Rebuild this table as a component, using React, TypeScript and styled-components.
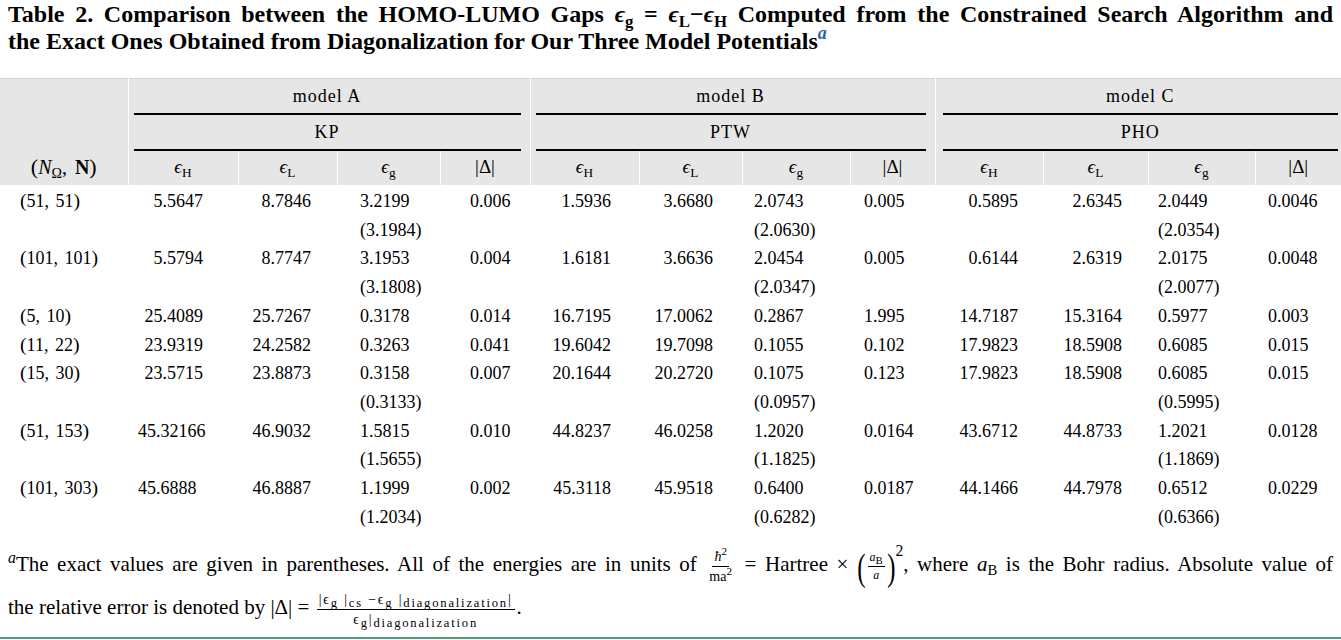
import React from "react";
import styled, { createGlobalStyle } from "styled-components";

const serif = `"Liberation Serif", "DejaVu Serif", serif`;

const Global = createGlobalStyle`
  html, body { margin: 0; padding: 0; background: #fff; }
  body { font-family: ${serif}; color: #000; }
`;

type Val = string | [string, string];
type Row = { n: string; m: string; cells: Val[]; leftFirst?: boolean };

const rows: Row[] = [
  { n: "51", m: "51", cells: ["5.5647", "8.7846", ["3.2199", "(3.1984)"], "0.006", "1.5936", "3.6680", ["2.0743", "(2.0630)"], "0.005", "0.5895", "2.6345", ["2.0449", "(2.0354)"], "0.0046"] },
  { n: "101", m: "101", cells: ["5.5794", "8.7747", ["3.1953", "(3.1808)"], "0.004", "1.6181", "3.6636", ["2.0454", "(2.0347)"], "0.005", "0.6144", "2.6319", ["2.0175", "(2.0077)"], "0.0048"] },
  { n: "5", m: "10", cells: ["25.4089", "25.7267", "0.3178", "0.014", "16.7195", "17.0062", "0.2867", "1.995", "14.7187", "15.3164", "0.5977", "0.003"] },
  { n: "11", m: "22", cells: ["23.9319", "24.2582", "0.3263", "0.041", "19.6042", "19.7098", "0.1055", "0.102", "17.9823", "18.5908", "0.6085", "0.015"] },
  { n: "15", m: "30", cells: ["23.5715", "23.8873", ["0.3158", "(0.3133)"], "0.007", "20.1644", "20.2720", ["0.1075", "(0.0957)"], "0.123", "17.9823", "18.5908", ["0.6085", "(0.5995)"], "0.015"] },
  { n: "51", m: "153", leftFirst: true, cells: ["45.32166", "46.9032", ["1.5815", "(1.5655)"], "0.010", "44.8237", "46.0258", ["1.2020", "(1.1825)"], "0.0164", "43.6712", "44.8733", ["1.2021", "(1.1869)"], "0.0128"] },
  { n: "101", m: "303", leftFirst: true, cells: ["45.6888", "46.8887", ["1.1999", "(1.2034)"], "0.002", "45.3118", "45.9518", ["0.6400", "(0.6282)"], "0.0187", "44.1466", "44.7978", ["0.6512", "(0.6366)"], "0.0229"] },
];

// per data column: width, alignment and inner padding
const cols: { w: number; align: "left" | "right"; pad: number }[] = [
  { w: 110, align: "right", pad: 35 }, { w: 99, align: "right", pad: 26 }, { w: 103, align: "left", pad: 23 }, { w: 90, align: "left", pad: 30 },
  { w: 109, align: "right", pad: 28 }, { w: 103, align: "right", pad: 29 }, { w: 108, align: "left", pad: 12 }, { w: 85, align: "left", pad: 14 },
  { w: 108, align: "right", pad: 25 }, { w: 105, align: "right", pad: 26 }, { w: 107, align: "left", pad: 10 }, { w: 86, align: "left", pad: 13 },
];

const groups = [
  { model: "model A", pot: "KP" },
  { model: "model B", pot: "PTW" },
  { model: "model C", pot: "PHO" },
];

const Eps = ({ s }: { s: string }) => (
  <>
    <Var>ϵ</Var>
    <Sub>{s}</Sub>
  </>
);

const App = () => {
  return (
    <Page>
      <Global />
      <Caption>
        <CaptionLine $justify>
          Table 2. Comparison between the HOMO-LUMO Gaps <Eps s="g" /> = <Eps s="L" />−<Eps s="H" /> Computed from the Constrained Search Algorithm and
        </CaptionLine>
        <CaptionLine>
          the Exact Ones Obtained from Diagonalization for Our Three Model Potentials<NoteMark>a</NoteMark>
        </CaptionLine>
      </Caption>

      <Table>
        <colgroup>
          <col style={{ width: 128 }} />
          {cols.map((c, i) => (
            <col key={i} style={{ width: c.w }} />
          ))}
        </colgroup>
        <thead>
          <tr>
            <StubHead rowSpan={2} />
            {groups.map((g, i) => (
              <HeadCell key={g.model} colSpan={4} $divider={i > 0}>
                <GroupLabel $last={i === 2}>{g.model}</GroupLabel>
              </HeadCell>
            ))}
          </tr>
          <tr>
            {groups.map((g, i) => (
              <HeadCell key={g.pot} colSpan={4} $divider={i > 0}>
                <GroupLabel $last={i === 2}>{g.pot}</GroupLabel>
              </HeadCell>
            ))}
          </tr>
          <tr>
            <StubHead>
              <StubLabel>
                <Paren>(</Paren>
                <Var>N</Var>
                <Sub>Ω</Sub>, <b>N</b>
                <Paren>)</Paren>
              </StubLabel>
            </StubHead>
            {groups.map((g) => (
              <React.Fragment key={g.model}>
                <HeadCell $divider>
                  <ColLabel><Eps s="H" /></ColLabel>
                </HeadCell>
                <HeadCell $divider>
                  <ColLabel><Eps s="L" /></ColLabel>
                </HeadCell>
                <HeadCell $divider>
                  <ColLabel><Eps s="g" /></ColLabel>
                </HeadCell>
                <HeadCell $divider>
                  <ColLabel>|Δ|</ColLabel>
                </HeadCell>
              </React.Fragment>
            ))}
          </tr>
        </thead>
        <tbody>
          {rows.map((r) => (
            <tr key={r.n + r.m}>
              <StubCell>
                <Paren>(</Paren>
                {r.n}, {r.m}
                <Paren>)</Paren>
              </StubCell>
              {r.cells.map((v, i) => {
                const left = i === 0 && r.leftFirst;
                return (
                  <Cell key={i} $align={left ? "left" : cols[i].align} $pad={left ? 10 : cols[i].pad}>
                    {Array.isArray(v) ? (
                      <>
                        {v[0]}
                        <br />
                        {v[1]}
                      </>
                    ) : (
                      v
                    )}
                  </Cell>
                );
              })}
            </tr>
          ))}
        </tbody>
      </Table>

      <Footnote>
        <FootLine $justify>
          <FootMark>a</FootMark>The exact values are given in parentheses. All of the energies are in units of{" "}
          <Frac $size={14}>
            <Num><Var>ħ</Var><FracSup>2</FracSup></Num>
            <Den>ma<FracSup>2</FracSup></Den>
          </Frac>{" "}
          = Hartree × <BigParen>(</BigParen>
          <Frac $size={12}>
            <Num><Var>a</Var><FracSub>B</FracSub></Num>
            <Den><Var>a</Var></Den>
          </Frac>
          <BigParen>)</BigParen>
          <PowerTwo>2</PowerTwo>, where <Var>a</Var>
          <Sub>B</Sub> is the Bohr radius. Absolute value of
        </FootLine>
        <FootLine>
          the relative error is denoted by |Δ| ={" "}
          <Frac $size={14} $wide>
            <Num>
              |ϵ<FracSub>g</FracSub> |<FracSub>cs</FracSub> −ϵ<FracSub>g</FracSub> |<FracSub>diagonalization</FracSub>|
            </Num>
            <Den>
              ϵ<FracSub>g</FracSub>|<FracSub>diagonalization</FracSub>
            </Den>
          </Frac>
          .
        </FootLine>
      </Footnote>
    </Page>
  );
};

export default App;

const Page = styled.div`
  width: 1341px;
  height: 640px;
  overflow: hidden;
  font-family: ${serif};
`;

const Caption = styled.div`
  padding: 1px 8px 0 8px;
  font-size: 24px;
  font-weight: 700;
  line-height: 27px;
`;

const CaptionLine = styled.div<{ $justify?: boolean }>`
  white-space: ${(p) => (p.$justify ? "normal" : "nowrap")};
  text-align: ${(p) => (p.$justify ? "justify" : "left")};
  text-align-last: ${(p) => (p.$justify ? "justify" : "left")};
`;

const Var = styled.i`
  font-family: ${serif};
`;

const Sub = styled.sub`
  font-size: 0.7em;
  line-height: 0;
  vertical-align: -0.3em;
  font-style: normal;
`;

const NoteMark = styled.sup`
  color: #2b5fae;
  font-style: italic;
  font-size: 0.75em;
  line-height: 0;
  vertical-align: 0.55em;
`;

const Paren = styled.span`
  font-size: 1.1em;
  line-height: 0;
`;

const Table = styled.table`
  width: 1341px;
  margin-top: 23px;
  border-collapse: collapse;
  table-layout: fixed;
  font-size: 18px;
  border-top: 1px solid #d4d4d4;

  tbody tr:first-child td {
    padding-top: 2px;
  }
`;

const HeadCell = styled.th<{ $divider?: boolean }>`
  background: #e6e6e6;
  font-weight: 400;
  padding: 0;
  text-align: center;
  vertical-align: middle;
  border-left: ${(p) => (p.$divider ? "1px solid #fff" : "none")};
`;

const StubHead = styled(HeadCell)`
  border-right: 1px solid #fff;
`;

const GroupLabel = styled.div<{ $last?: boolean }>`
  height: 34px;
  line-height: 34px;
  letter-spacing: 1px;
  border-bottom: 2px solid #000;
  margin: ${(p) => (p.$last ? "0 3px 0 7px" : "0 9px 0 5px")};
`;

const ColLabel = styled.div`
  height: 34px;
  line-height: 32px;
  font-size: 19px;
`;

const StubLabel = styled(ColLabel)`
  font-size: 20px;
  word-spacing: 3px;
`;

const StubCell = styled.td`
  padding: 0 0 0 20px;
  line-height: 28.7px;
  vertical-align: top;
  white-space: nowrap;
  word-spacing: 2px;
`;

const Cell = styled.td<{ $align: "left" | "right"; $pad: number }>`
  padding: 0;
  line-height: 28.7px;
  vertical-align: top;
  white-space: nowrap;
  text-align: ${(p) => p.$align};
  ${(p) => (p.$align === "left" ? `padding-left: ${p.$pad}px;` : `padding-right: ${p.$pad}px;`)}
`;

const Footnote = styled.div`
  margin-top: 12px;
  padding: 0 8px 8px 8px;
  font-size: 21px;
  border-bottom: 2px solid #4f9d76;
`;

const FootLine = styled.div<{ $justify?: boolean }>`
  height: 43px;
  line-height: 43px;
  white-space: ${(p) => (p.$justify ? "normal" : "nowrap")};
  text-align: ${(p) => (p.$justify ? "justify" : "left")};
  text-align-last: ${(p) => (p.$justify ? "justify" : "left")};
`;

const FootMark = styled.sup`
  font-style: italic;
  font-size: 0.75em;
  line-height: 0;
  vertical-align: 0.5em;
`;

const Frac = styled.span<{ $size: number; $wide?: boolean }>`
  display: inline-flex;
  flex-direction: column;
  align-items: center;
  vertical-align: middle;
  font-size: ${(p) => p.$size}px;
  letter-spacing: ${(p) => (p.$wide ? "1.8px" : "0")};
  line-height: 1.25;
  margin: 0 2px;
`;

const Num = styled.span`
  padding: 0 2px 1px;
  border-bottom: 1px solid #000;
  white-space: nowrap;
`;

const Den = styled.span`
  padding: 1px 2px 0;
  white-space: nowrap;
`;

const FracSub = styled.sub`
  font-size: 0.9em;
  line-height: 0;
  vertical-align: -0.25em;
`;

const FracSup = styled.sup`
  font-size: 0.8em;
  line-height: 0;
  vertical-align: 0.5em;
`;

const BigParen = styled.span`
  display: inline-block;
  font-size: 38px;
  line-height: 1;
  vertical-align: middle;
  transform: scaleX(0.65);
  margin: 0 -2px;
`;

const PowerTwo = styled.sup`
  font-size: 0.75em;
  line-height: 0;
  vertical-align: 15px;
`;
